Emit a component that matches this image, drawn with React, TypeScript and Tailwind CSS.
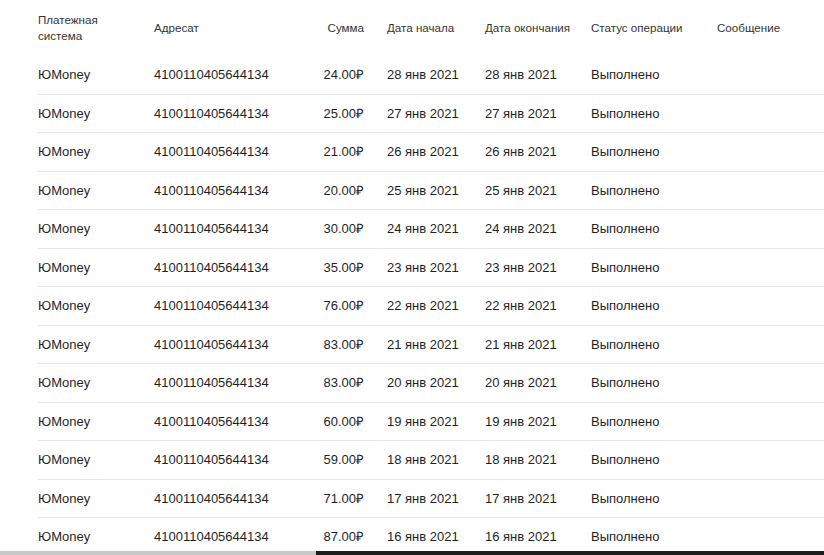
import React from "react";

const rows = [
  ["24.00", "28"],
  ["25.00", "27"],
  ["21.00", "26"],
  ["20.00", "25"],
  ["30.00", "24"],
  ["35.00", "23"],
  ["76.00", "22"],
  ["83.00", "21"],
  ["83.00", "20"],
  ["60.00", "19"],
  ["59.00", "18"],
  ["71.00", "17"],
  ["87.00", "16"],
];

const grid = "grid grid-cols-[116px_146px_64px_121px_106px_126px_1fr] items-center";

export default function App() {
  return (
    <div
      className="relative w-[824px] h-[555px] overflow-hidden bg-white text-[#1f1f1f]"
      style={{ fontFamily: '"Liberation Sans", Arial, sans-serif' }}
    >
      <div className="pl-[38px]">
        <div className={`${grid} h-[55px] text-[11.6px] leading-[16px] text-[#333]`}>
          <div>
            Платежная
            <br />
            система
          </div>
          <div>Адресат</div>
          <div className="text-right">Сумма</div>
          <div className="pl-[23px]">Дата начала</div>
          <div>Дата окончания</div>
          <div>Статус операции</div>
          <div>Сообщение</div>
        </div>
        {rows.map(([sum, day], i) => (
          <div
            key={i}
            className={`${grid} h-[38.5px] text-[13px] ${i > 0 ? "border-t border-[#e6e6e6]" : ""}`}
          >
            <div>ЮMoney</div>
            <div>4100110405644134</div>
            <div className="text-right">{sum}₽</div>
            <div className="pl-[23px]">{day} янв 2021</div>
            <div>{day} янв 2021</div>
            <div>Выполнено</div>
            <div></div>
          </div>
        ))}
      </div>
      <div className="absolute bottom-0 left-0 right-0 h-[4px] flex">
        <div className="w-[316px] bg-[#c8c8c8]" />
        <div className="flex-1 bg-[#1c1c1c]" />
      </div>
    </div>
  );
}
